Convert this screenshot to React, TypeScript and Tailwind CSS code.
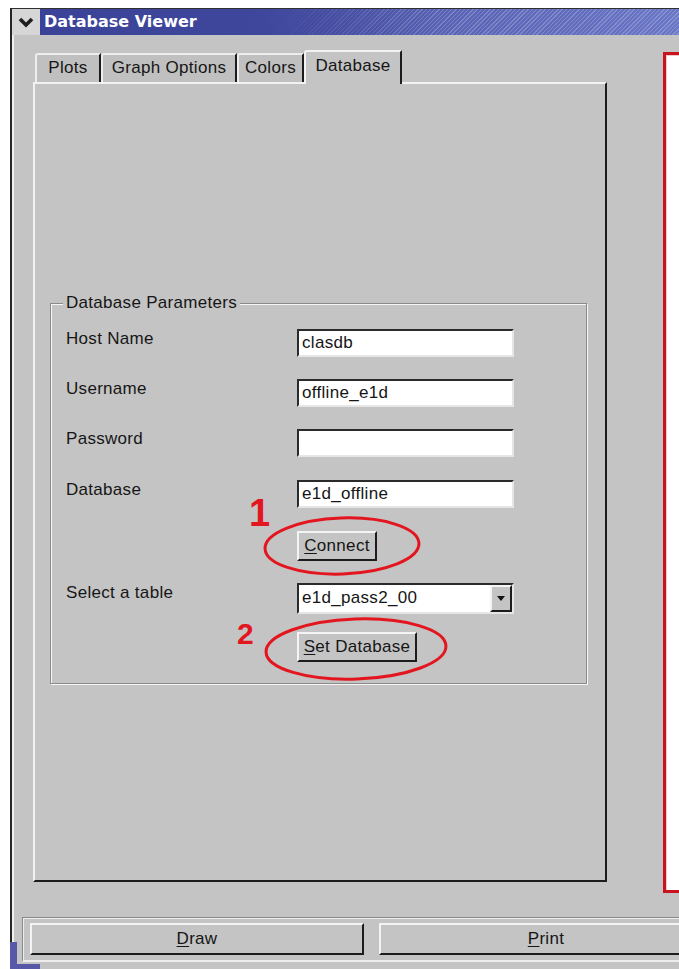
import type { ReactNode } from "react";

const raised =
  "border-2 border-t-[#f4f4f4] border-l-[#f4f4f4] border-b-[#1c1c1c] border-r-[#1c1c1c] bg-[#c4c4c4]";
const sunken =
  "border-2 border-t-[#2a2a2a] border-l-[#2a2a2a] border-b-[#e6e6e6] border-r-[#e6e6e6] bg-white";

function Mnemonic({ text }: { text: string }) {
  return (
    <>
      <span className="underline underline-offset-2">{text[0]}</span>
      {text.slice(1)}
    </>
  );
}

function Entry({ value }: { value?: string }) {
  return (
    <div className={`${sunken} h-[28px] w-[217px] pl-[3px] leading-[24px]`}>{value}</div>
  );
}

function Row({ label, children }: { label: string; children: ReactNode }) {
  return (
    <div className="flex">
      <span className="w-[231px] leading-[20px]">{label}</span>
      {children}
    </div>
  );
}

function Tab({ label, width, active }: { label: string; width: string; active?: boolean }) {
  if (active) {
    return (
      <div
        className={`relative z-10 -mb-[2px] flex h-[34px] ${width} items-start justify-center rounded-tl-[3px] border-l-2 border-t-2 border-r-2 border-l-[#f2f2f2] border-t-[#f2f2f2] border-r-[#1c1c1c] bg-[#c4c4c4] pt-[4px] leading-[20px]`}
      >
        {label}
      </div>
    );
  }
  return (
    <div
      className={`flex h-[29px] ${width} items-start justify-center rounded-tl-[3px] border-l-2 border-t-2 border-r-2 border-l-[#eeeeee] border-t-[#eeeeee] border-r-[#1c1c1c] bg-[#c0c0c0] pt-[3px] leading-[20px]`}
    >
      {label}
    </div>
  );
}

export default function App() {
  return (
    <div className="relative h-[969px] w-[679px] overflow-hidden bg-white font-['Liberation_Sans',Arial,sans-serif] text-[17px] tracking-[0.3px] text-[#161616]">
      <div className="ml-[10px] mt-[8px] flex h-[961px] w-[669px] flex-col border-l-2 border-l-[#262626] bg-[#c4c4c4] shadow-[inset_2px_0_0_#efefef]">
        {/* title bar */}
        <div className="flex h-[27px] shrink-0 border-t border-t-[#303030]">
          <div className="flex w-[28px] items-center justify-center bg-[#d6d6d6]">
            <svg width="16" height="12" viewBox="0 0 16 12">
              <polyline points="2,3 8,9 14,3" fill="none" stroke="#1e1e1e" strokeWidth="3.6" />
            </svg>
          </div>
          <div className="flex flex-1 items-center bg-[linear-gradient(to_right,#3b4398_0%,#3f479c_35%,transparent_62%),repeating-linear-gradient(135deg,rgba(255,255,255,0.2)_0px,rgba(255,255,255,0.2)_1px,transparent_1px,transparent_3px),linear-gradient(to_right,#3b4398,#6a76c6)] pl-[4px] font-['DejaVu_Sans',sans-serif] text-[16px] font-bold tracking-normal text-white">
            Database Viewer
          </div>
        </div>

        {/* main area: tab widget and plot canvas */}
        <div className="flex shrink-0 pl-[21px] pt-[15px]">
          <div className="flex w-[574px] flex-col">
            <div className="flex items-end pl-[2px]">
              <Tab label="Plots" width="w-[66px]" />
              <Tab label="Graph Options" width="w-[136px]" />
              <Tab label="Colors" width="w-[67px]" />
              <Tab label="Database" width="w-[98px]" active />
            </div>
            <div className="h-[800px] border-2 border-t-[#f2f2f2] border-l-[#f2f2f2] border-b-[#1c1c1c] border-r-[#1c1c1c] pl-[15px] pt-[219px]">
              <div className="relative h-[381px] w-[537px] border border-[#8a8a8a] pl-[15px] pt-[25px] shadow-[inset_1px_1px_0_#f6f6f6,1px_1px_0_#f6f6f6]">
                <span className="absolute left-[12px] top-[-11px] bg-[#c4c4c4] px-[3px] leading-[20px]">
                  Database Parameters
                </span>
                <Row label="Host Name">
                  <Entry value="clasdb" />
                </Row>
                <div className="mt-[22px]">
                  <Row label="Username">
                    <Entry value="offline_e1d" />
                  </Row>
                </div>
                <div className="mt-[22px]">
                  <Row label="Password">
                    <Entry />
                  </Row>
                </div>
                <div className="mt-[23px]">
                  <Row label="Database">
                    <Entry value="e1d_offline" />
                  </Row>
                </div>
                <div className="mt-[23px] pl-[231px]">
                  <button className={`${raised} h-[30px] w-[80px] leading-[24px]`}>
                    <Mnemonic text="Connect" />
                  </button>
                </div>
                <div className="mt-[22px]">
                  <Row label="Select a table">
                    <div className={`${sunken} flex h-[31px] w-[217px] items-stretch`}>
                      <span className="flex-1 pl-[3px] leading-[26px]">e1d_pass2_00</span>
                      <span className={`${raised} flex w-[22px] items-center justify-center`}>
                        <svg width="8" height="5" viewBox="0 0 8 5">
                          <polygon points="0,0 8,0 4,5" fill="#111" />
                        </svg>
                      </span>
                    </div>
                  </Row>
                </div>
                <div className="mt-[18px] pl-[231px]">
                  <button className={`${raised} h-[30px] w-[120px] leading-[24px]`}>
                    <Mnemonic text="Set Database" />
                  </button>
                </div>
              </div>
            </div>
          </div>
          <div className="ml-[56px] mt-[2px] h-[841px] flex-1 border-[3px] border-r-0 border-[#c8141e] bg-white shadow-[inset_1px_1px_0_#f3c9c9]" />
        </div>

        {/* bottom button strip */}
        <div className="ml-[10px] mt-[24px] flex h-[45px] w-[700px] shrink-0 gap-[15px] border-l border-t border-l-[#8a8a8a] border-t-[#8a8a8a] border-b-2 border-b-[#ededed] pl-[7px] pt-[5px] shadow-[inset_1px_1px_0_#ededed]">
          <button className={`${raised} h-[32px] w-[334px] leading-[26px]`}>
            <Mnemonic text="Draw" />
          </button>
          <button className={`${raised} h-[32px] w-[334px] leading-[26px]`}>
            <Mnemonic text="Print" />
          </button>
        </div>
      </div>

      {/* corner of the panel behind the window */}
      <div className="absolute left-[10px] top-[942px] h-[27px] w-[7px] bg-[#5858a8]" />
      <div className="absolute left-[10px] top-[964px] h-[5px] w-[30px] bg-[#5858a8]" />

      {/* hand-drawn step markers */}
      <svg className="pointer-events-none absolute left-0 top-0" width="679" height="969">
        <ellipse cx="342" cy="546" rx="77" ry="28" fill="none" stroke="#e3161f" strokeWidth="3" transform="rotate(-2 342 546)" />
        <ellipse cx="356" cy="649" rx="90" ry="30" fill="none" stroke="#e3161f" strokeWidth="3" transform="rotate(-2 356 649)" />
      </svg>
      <span className="absolute left-[249px] top-[494px] text-[38px] font-bold leading-none tracking-normal text-[#e3161f]">1</span>
      <span className="absolute left-[237px] top-[619px] text-[30px] font-bold leading-none tracking-normal text-[#e3161f]">2</span>
    </div>
  );
}
